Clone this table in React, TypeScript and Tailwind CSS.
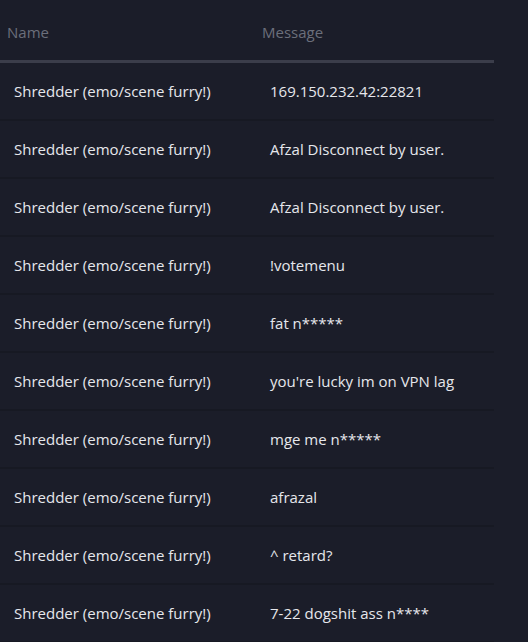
const rows: [string, string][] = [
  ["Shredder (emo/scene furry!)", "169.150.232.42:22821"],
  ["Shredder (emo/scene furry!)", "Afzal Disconnect by user."],
  ["Shredder (emo/scene furry!)", "Afzal Disconnect by user."],
  ["Shredder (emo/scene furry!)", "!votemenu"],
  ["Shredder (emo/scene furry!)", "fat n*****"],
  ["Shredder (emo/scene furry!)", "you're lucky im on VPN lag"],
  ["Shredder (emo/scene furry!)", "mge me n*****"],
  ["Shredder (emo/scene furry!)", "afrazal"],
  ["Shredder (emo/scene furry!)", "^ retard?"],
  ["Shredder (emo/scene furry!)", "7-22 dogshit ass n****"],
]

export default function App() {
  return (
    <div
      className="w-[528px] h-[642px] overflow-hidden bg-[#1b1d29] text-[15px]"
      style={{ fontFamily: '"Open Sans", "Noto Sans", sans-serif' }}
    >
      <div className="w-[494px]">
        {/* Header */}
        <div className="grid grid-cols-[255px_1fr] h-[63px] border-b-[3px] border-[#3b3d4a] text-[#6b6f7b]">
          <div className="pl-[7px] pt-[21px]">Name</div>
          <div className="pl-[7px] pt-[21px]">Message</div>
        </div>

        {/* Rows */}
        {rows.map(([name, msg], i) => (
          <div
            key={i}
            className="grid grid-cols-[255px_1fr] h-[58px] items-center border-b-2 border-[#171923] text-[#e6e7ec]"
          >
            <div className="pl-[14px]">{name}</div>
            <div className="pl-[15px]">{msg}</div>
          </div>
        ))}
      </div>
    </div>
  )
}
